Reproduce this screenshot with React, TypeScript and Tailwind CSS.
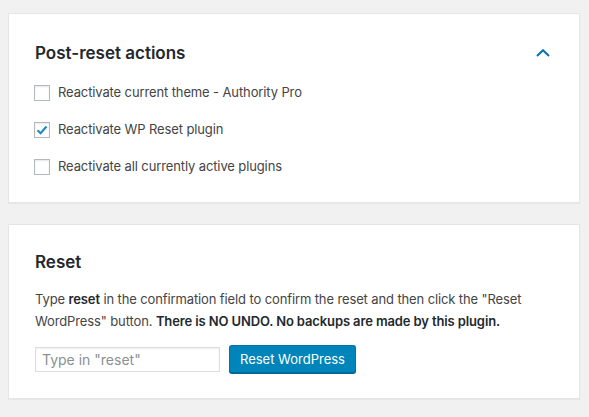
import React from 'react';

const actions = [
  { label: 'Reactivate current theme - Authority Pro', checked: false },
  { label: 'Reactivate WP Reset plugin', checked: true },
  { label: 'Reactivate all currently active plugins', checked: false },
];

function Checkbox({ checked }: { checked: boolean }) {
  return (
    <span className="w-4 h-4 shrink-0 border border-[#b4b9be] bg-white shadow-[inset_0_1px_2px_rgba(0,0,0,0.1)] flex items-center justify-center">
      {checked && (
        <svg width="12" height="10" viewBox="0 0 12 10">
          <path d="M1.5 5.2 L4.6 8.2 L10.5 1.5" fill="none" stroke="#1e8cbe" strokeWidth="2.2" />
        </svg>
      )}
    </span>
  );
}

export default function App() {
  return (
    <div className="min-h-screen bg-[#f1f1f1] px-2 pt-[13px] pb-4 font-['Inter',sans-serif] text-[#23282d]">
      {/* Post-reset actions */}
      <div className="w-[572px] bg-white border border-[#e5e5e5] shadow-[0_1px_1px_rgba(0,0,0,0.04)] pl-[25px] pr-[28px] pt-[28px] pb-[27px]">
        <div className="flex items-center justify-between">
          <h2 className="pl-px text-[17px] leading-[22px] font-semibold">Post-reset actions</h2>
          <svg width="14" height="8" viewBox="0 0 14 8" className="mr-[1px]">
            <path d="M1 7 L7 1.2 L13 7" fill="none" stroke="#0073aa" strokeWidth="2" />
          </svg>
        </div>
        <div className="mt-[21px] flex flex-col gap-[21px]">
          {actions.map((a) => (
            <label key={a.label} className="flex items-center gap-2 h-4 text-[13px] tracking-[-0.12px] text-[#444]">
              <Checkbox checked={a.checked} />
              <span>{a.label}</span>
            </label>
          ))}
        </div>
      </div>

      {/* Reset */}
      <div className="mt-[21px] w-[572px] bg-white border border-[#e5e5e5] shadow-[0_1px_1px_rgba(0,0,0,0.04)] pl-[26px] pr-[20px] pt-[26px] pb-[25px]">
        <h2 className="text-[17px] leading-[22px] font-semibold">Reset</h2>
        <p className="mt-[15px] text-[13px] leading-[22px] tracking-[-0.12px] text-[#444]">
          Type <b className="font-semibold text-[#23282d]">reset</b> in the confirmation field to confirm the reset and then click the "Reset
          <br />
          WordPress" button. <b className="font-semibold text-[#23282d]">There is NO UNDO. No backups are made by this plugin.</b>
        </p>
        <div className="mt-[13px] flex items-center gap-[9px]">
          <input
            type="text"
            placeholder={'Type in "reset"'}
            className="w-[185px] h-[25px] px-[6px] border border-[#ddd] shadow-[inset_0_1px_2px_rgba(0,0,0,0.07)] text-[14px] text-[#32373c] placeholder:text-[#8a8f94] outline-none"
          />
          <button className="h-[28px] px-[10px] rounded-[3px] bg-[#0085ba] border border-[#0073aa] border-b-[#006799] shadow-[0_1px_0_#006799] text-white text-[13px] leading-none">
            Reset WordPress
          </button>
        </div>
      </div>
    </div>
  );
}
